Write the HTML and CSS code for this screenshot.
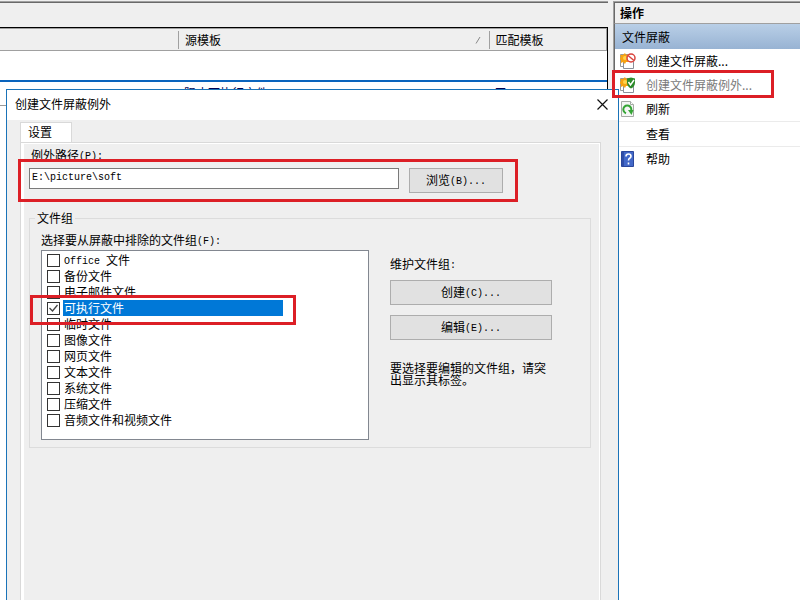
FILE: index.html
```html
<!DOCTYPE html>
<html lang="zh-CN">
<head>
    <meta charset="UTF-8">
    <meta name="viewport" content="width=device-width, initial-scale=1.0">
    <title>创建文件屏蔽例外</title>
    <link rel="stylesheet" href="styles.css">
</head>
<body>
    <div class="console">
        <main class="results">
            <div class="filter-bar"></div>
            <div class="table-frame">
                <table class="screens">
                    <thead>
                        <tr>
                            <th class="col-path"></th>
                            <th class="col-template"><div class="head-cell">源模板
                                <svg class="sort" width="6" height="8" viewBox="0 0 6 8" aria-hidden="true"><path d="M1 7.5L5 1" stroke="#888"/></svg>
                            </div></th>
                            <th class="col-match"><div class="head-cell">匹配模板</div></th>
                        </tr>
                    </thead>
                    <tbody>
                        <tr class="group-row"><td colspan="3"></td></tr>
                        <tr class="data-row"><td></td><td>阻止可执行文件</td><td>无</td></tr>
                    </tbody>
                </table>
            </div>
        </main>

        <aside class="actions">
            <h2 class="actions-title">操作</h2>
            <h3 class="actions-group">文件屏蔽</h3>
            <ul class="action-list">
                <li><button class="action" type="button">
                    <svg width="16" height="16" viewBox="0 0 16 16" aria-hidden="true">
                        <path d="M.5 1.500h8v12h-8z" fill="#fff" stroke="#999"/>
                        <path d="M3.500 6.500h10v9h-10z" fill="#fff" stroke="#8a8f99"/>
                        <path d="M5 0l1 2 3-1-1 3 2 1-2 2 1 2-3 0-1 2-2-2-2 1 0-3-2-1 2-2-1-2 3 0z" fill="#f7a312"/>
                        <circle cx="5" cy="5" r="2" fill="#ffd34d"/>
                        <circle cx="11" cy="5" r="4" fill="#fff" stroke="#d9433d" stroke-width="1.500"/>
                        <path d="M8 2.500l6 5" stroke="#d9433d" stroke-width="1.500"/>
                    </svg>
                    <span>创建文件屏蔽...</span>
                </button></li>
                <li class="marked"><button class="action" type="button" disabled>
                    <svg width="16" height="16" viewBox="0 0 16 16" aria-hidden="true">
                        <path d="M.5 1.500h8v12h-8z" fill="#fff" stroke="#999"/>
                        <path d="M3.500 6.500h10v9h-10z" fill="#fff" stroke="#8a8f99"/>
                        <path d="M5 0l1 2 3-1-1 3 2 1-2 2 1 2-3 0-1 2-2-2-2 1 0-3-2-1 2-2-1-2 3 0z" fill="#f7a312"/>
                        <circle cx="5" cy="5" r="2" fill="#ffd34d"/>
                        <path d="M7 1.500l4-1 4 1v4q0 4-4 6-4-2-4-6z" fill="#2d8a2b"/>
                        <path d="M8.500 5l2 3 3.500-5" fill="none" stroke="#fff" stroke-width="1.500"/>
                    </svg>
                    <span>创建文件屏蔽例外...</span>
                </button></li>
                <li class="divided"><button class="action" type="button">
                    <svg width="16" height="16" viewBox="0 0 16 16" aria-hidden="true">
                        <path d="M1.500 0.500h9l3 3v12h-12z" fill="#f4f6f4" stroke="#a5aaa5"/>
                        <path d="M10.500 0.500v3h3" fill="#fff" stroke="#a5aaa5"/>
                        <path d="M6 12.200a4 4 0 1 1 5-2.200" fill="none" stroke="#35a535" stroke-width="2"/>
                        <path d="M8 9h5.500l-2 5z" fill="#35a535"/>
                    </svg>
                    <span>刷新</span>
                </button></li>
                <li class="divided"><button class="action" type="button">
                    <span class="no-icon"></span>
                    <span>查看</span>
                </button></li>
                <li><button class="action" type="button">
                    <svg width="16" height="16" viewBox="0 0 16 16" aria-hidden="true">
                        <path d="M1.500 0.500h12v15h-12z" fill="#4268c8" stroke="#2b479c"/>
                        <path d="M2 1h2v14h-2z" fill="#2f4ea8"/>
                        <path d="M6 5.500q0-2.500 2.500-2.500 2.500 0 2.500 2.200 0 1.300-1.300 2-1.200.8-1.200 2.300M8.500 11.500v2" fill="none" stroke="#fff" stroke-width="1.600"/>
                    </svg>
                    <span>帮助</span>
                </button></li>
            </ul>
        </aside>
    </div>

    <form class="dialog" role="dialog" aria-labelledby="dialog-title">
        <header class="title-bar">
            <h1 id="dialog-title">创建文件屏蔽例外</h1>
            <button class="close" type="button" aria-label="关闭">
                <svg width="11" height="11" viewBox="0 0 11 11" aria-hidden="true"><path d="M.5.5l10 10M10.500.5l-10 10" stroke="#111" stroke-width="1.200"/></svg>
            </button>
        </header>
        <div class="dialog-body">
            <div class="tabs" role="tablist">
                <button class="tab" type="button" role="tab" aria-selected="true">设置</button>
            </div>
            <div class="tab-page" role="tabpanel">
                <label class="path-label" for="path">例外路径<span class="half">(P):</span></label>
                <div class="path-row marked">
                    <input class="path half" id="path" type="text" value="E:\picture\soft">
                    <button class="push browse" type="button">浏览<span class="half">(B)...</span></button>
                </div>

                <fieldset class="groups">
                    <legend>文件组</legend>
                    <div class="groups-columns">
                        <div class="groups-list">
                            <p class="list-label" id="list-label">选择要从屏蔽中排除的文件组<span class="half">(F):</span></p>
                            <ul class="check-list" aria-labelledby="list-label">
                                <li><label><input type="checkbox"><span><span class="half">Office </span>文件</span></label></li>
                                <li><label><input type="checkbox"><span>备份文件</span></label></li>
                                <li><label><input type="checkbox"><span>电子邮件文件</span></label></li>
                                <li class="selected marked"><label><input type="checkbox" checked><span>可执行文件</span></label></li>
                                <li><label><input type="checkbox"><span>临时文件</span></label></li>
                                <li><label><input type="checkbox"><span>图像文件</span></label></li>
                                <li><label><input type="checkbox"><span>网页文件</span></label></li>
                                <li><label><input type="checkbox"><span>文本文件</span></label></li>
                                <li><label><input type="checkbox"><span>系统文件</span></label></li>
                                <li><label><input type="checkbox"><span>压缩文件</span></label></li>
                                <li><label><input type="checkbox"><span>音频文件和视频文件</span></label></li>
                            </ul>
                        </div>
                        <div class="maintain">
                            <p>维护文件组<span class="half">:</span></p>
                            <button class="push" type="button">创建<span class="half">(C)...</span></button>
                            <button class="push" type="button">编辑<span class="half">(E)...</span></button>
                            <p class="hint">要选择要编辑的文件组，请突出显示其标签。</p>
                        </div>
                    </div>
                </fieldset>
            </div>
        </div>
    </form>
</body>
</html>
```

FILE: styles.css
```css
*, *::after {
    box-sizing: border-box;
}
body {
    margin: 0;
    height: 100vh;
    overflow: hidden;
    background: #efefef;
    color: #000;
    font: 12px/16px "Noto Sans CJK SC", sans-serif;
}
h1, h2, h3, p, ul {
    margin: 0;
    padding: 0;
    font-size: 12px;
    font-weight: normal;
}
ul {
    list-style: none;
}
button, input {
    margin: 0;
    padding: 0;
    color: inherit;
    font: inherit;
}
/* half-width latin next to 12px hanzi */
.half {
    font-family: "Liberation Mono", monospace;
    font-size: 10px;
    line-height: 10px;
    vertical-align: 1px;
    white-space: pre;
}

/* console behind the dialog */
.console {
    display: flex;
    gap: 5px;
    height: 100vh;
    padding-top: 1px;
}
.results {
    flex: 1;
    display: flex;
    flex-direction: column;
    border-top: 1px solid #a0a0a0;
}
.filter-bar {
    height: 25px;
    border-top: 1px solid #696969;
}
.table-frame {
    flex: 1;
    border: solid #000;
    border-width: 1px 1px 0 0;
    background: #fff;
}
.screens {
    width: 100%;
    table-layout: fixed;
    border-collapse: collapse;
}
.screens th {
    height: 22px;
    padding: 0;
    border: solid #a0a0a0;
    border-width: 1px 0;
    background: #efefef;
    font-weight: normal;
    text-align: left;
}
.screens td {
    padding: 0 6px;
}
.col-path {
    width: 178px;
}
.col-match {
    width: 118px;
}
.screens .col-match {
    border-right: 1px solid #a0a0a0;
}
.head-cell {
    display: flex;
    align-items: center;
    justify-content: space-between;
    height: 18px;
    padding: 0 8px 0 6px;
    border-left: 1px solid #a0a0a0;
}
.group-row td {
    height: 30px;
    border-bottom: 2px solid #0a64bd;
}
.screens .data-row td {
    height: 25px;
    padding-bottom: 1px;
    border-bottom: 1px solid #999;
    color: #000050;
}

.actions {
    width: 187px;
    border: solid #a0a0a0;
    border-width: 1px 0 0 1px;
    background: #fff;
}
.actions-title {
    height: 22px;
    padding-left: 5px;
    border: solid #696969;
    border-width: 1px 0 0 1px;
    border-bottom: 1px solid #a0a0a0;
    background: #efefef;
    font-weight: bold;
    line-height: 20px;
}
.actions-group {
    height: 25px;
    padding-left: 7px;
    border-left: 1px solid #696969;
    background: linear-gradient(#b9cfe7, #98b3d3);
    line-height: 25px;
}
.action-list {
    border-left: 1px solid #696969;
}
.action-list .divided {
    border-bottom: 1px solid #ebebeb;
}
.action {
    display: flex;
    align-items: center;
    gap: 10px;
    width: 100%;
    height: 24px;
    padding-left: 5px;
    border: 0;
    background: none;
}
.action:disabled {
    color: #7a7a7a;
}
.no-icon {
    width: 16px;
}

/* red frames round the parts to look at */
.marked {
    position: relative;
}
.marked::after {
    content: "";
    position: absolute;
    z-index: 3;
    border: 3px solid #dc1f26;
    pointer-events: none;
}
.action-list .marked::after {
    top: -3px;
    left: -3px;
    width: 162px;
    height: 28px;
}
.path-row.marked::after {
    inset: -9px -15px -9px -11px;
}
.check-list .marked::after {
    top: -5px;
    left: -17px;
    width: 266px;
    height: 30px;
}

/* dialog window */
.dialog {
    position: absolute;
    top: 89px;
    right: 181px;
    bottom: 0;
    left: 6px;
    display: flex;
    flex-direction: column;
    border: 1px solid #1a73b8;
    border-bottom: 0;
    background: #efefef;
}
.title-bar {
    display: flex;
    align-items: center;
    justify-content: space-between;
    height: 30px;
    padding: 0 10px 2px 8px;
    background: #fff;
}
.close {
    display: flex;
    border: 0;
    background: none;
}
.dialog-body {
    flex: 1;
    display: flex;
    flex-direction: column;
    padding: 2px 17px 0 13px;
}
.tab {
    display: block;
    width: 52px;
    height: 20px;
    padding: 0 12px 2px 0;
    border: 1px solid #d9d9d9;
    border-bottom: 0;
    background: #fff;
}
.tab-page {
    flex: 1;
    padding: 3px 9px 0 8px;
    border: solid #d9d9d9;
    border-width: 1px 1px 0;
    box-shadow: inset 3px 1px #fff, inset -1px 0 #fff;
}
.path-label {
    display: block;
    padding-left: 2px;
    line-height: 18px;
}
.path-row {
    display: flex;
    align-items: flex-start;
    gap: 10px;
    margin: 4px 88px 0 0;
}
.path {
    flex: 1;
    height: 21px;
    padding: 0 2px 2px;
    border: 1px solid #7a7a7a;
    background: #fff;
}
.push {
    height: 25px;
    padding-bottom: 2px;
    border: 1px solid #adadad;
    background: #e1e1e1;
}
.browse {
    width: 94px;
}
.groups {
    margin: 18px 0 0;
    padding: 7px 38px 7px 11px;
    border: 1px solid #dcdcdc;
}
.groups legend {
    margin-left: -6px;
    padding: 0 2px;
    line-height: 14px;
}
.groups-columns {
    display: flex;
    gap: 21px;
}
.groups-list {
    flex: 1;
}
.list-label {
    margin-bottom: 2px;
}
.check-list {
    padding: 1px 0 11px 5px;
    border: 1px solid #828790;
    background: #fff;
}
.check-list label {
    display: flex;
    align-items: center;
    gap: 3px;
    height: 16px;
}
.check-list label > span {
    padding-left: 1px;
}
.check-list input {
    appearance: none;
    width: 13px;
    height: 13px;
    border: 1px solid #333;
    background: #fff;
}
.check-list input:checked {
    background: #fff url("data:image/svg+xml,%3Csvg xmlns='http://www.w3.org/2000/svg' width='11' height='11'%3E%3Cpath d='M1.500 5l3 3 5-6' fill='none' stroke='%23444' stroke-width='1.300'/%3E%3C/svg%3E");
}
.check-list .selected label > span {
    width: 220px;
    background: #0078d7;
    color: #fff;
}
.maintain {
    display: flex;
    flex-direction: column;
    gap: 10px;
    width: 162px;
    padding-top: 24px;
}
.maintain p {
    margin-bottom: -2px;
}
.maintain .hint {
    margin-top: 12px;
    padding-right: 4px;
    line-height: 12px;
}
```
